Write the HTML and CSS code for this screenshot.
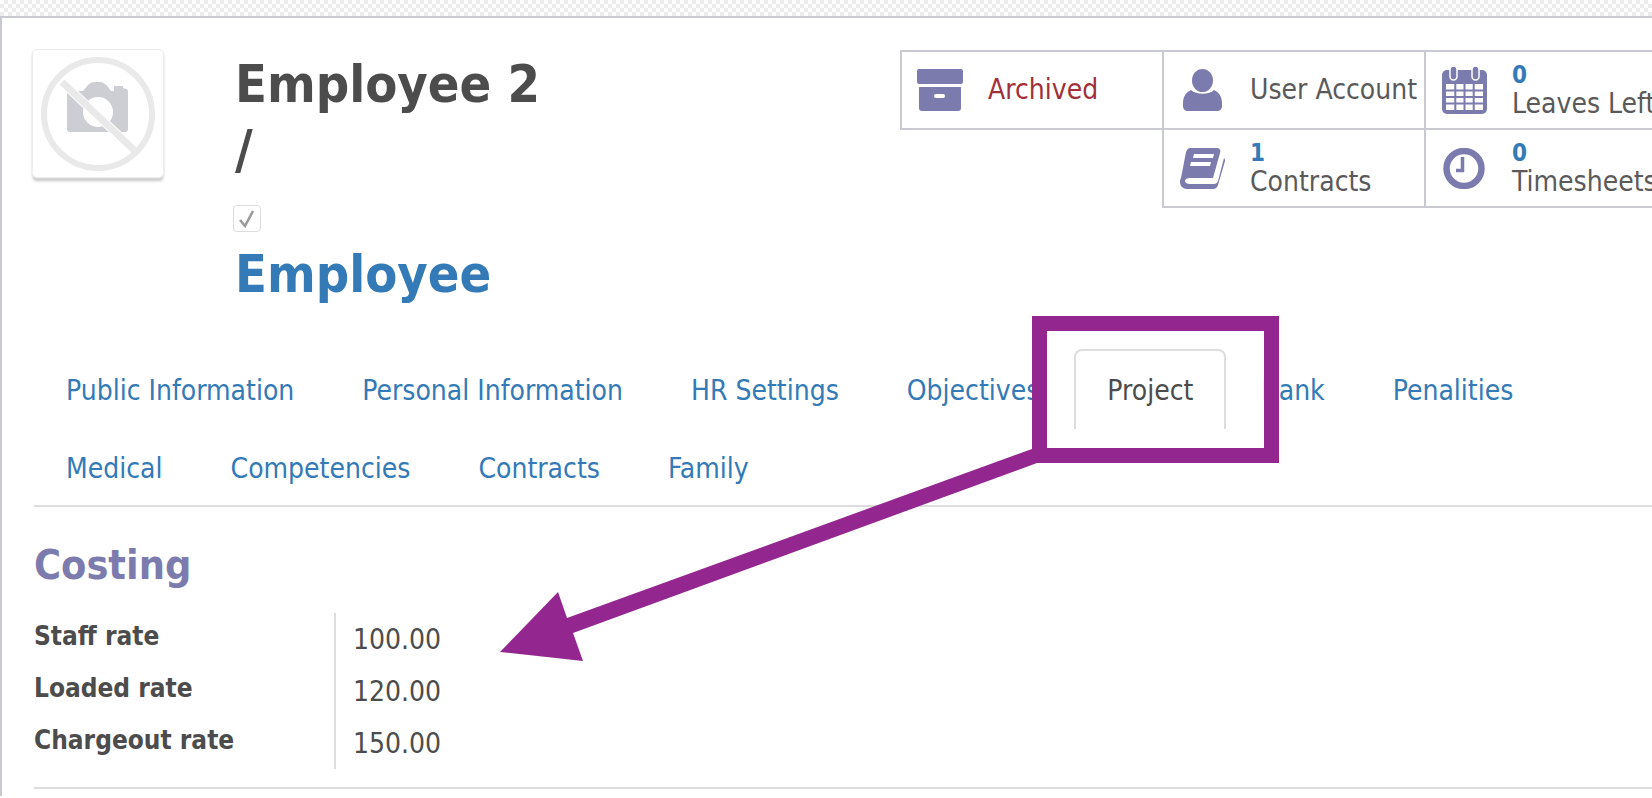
FILE: index.html
```html
<!doctype html>
<html lang="en-us">
  <head>
    <meta charset="utf-8">
    <title>Employee 2</title>
    <link rel="stylesheet" href="styles.css">
  </head>
  <body>
    <div class="band"></div>
    <div class="sheet">
      <div class="header">
        <div class="avatar">
          <svg width="132" height="130" viewBox="0 0 132 130">
            <path class="cam" d="M37 42h14l5-6c2-2 4-3 7-3h4c4 0 7 2 9 5l3 4h3v-5h9v2l3 1c2 0 2 2 2 3v37c0 2-1 3-3 3H38c-2 0-3-1-3-3V45c0-2 1-3 2-3z"/>
            <circle class="lens" cx="66" cy="63" r="15"/>
            <path class="slash-gap" d="M30 33l72 68"/>
            <path class="slash" d="M30 33l72 68"/>
            <circle class="ring" cx="66" cy="65" r="54"/>
          </svg>
        </div>
        <div class="title">
          <h1 class="name">Employee 2</h1>
          <div class="slash-line">/</div>
          <div class="check">
            <svg width="20" height="20" viewBox="0 0 20 20"><path d="M3 11l5 6 8-15" fill="none" stroke="#9a9a9a" stroke-width="2.6"/></svg>
          </div>
          <div class="category">Employee</div>
        </div>
        <div class="stats">
          <div class="stat">
            <div class="ico-box">
              <svg class="ico" width="46" height="42" viewBox="0 0 46 42">
                <rect width="46" height="15" rx="2"/>
                <path d="M2 18h42v21c0 2-1 3-3 3H5c-2 0-3-1-3-3z"/>
                <rect class="hole" x="17" y="25" width="11" height="4" rx="2"/>
              </svg>
            </div>
            <span class="stat-label archived">Archived</span>
          </div>
          <div class="stat">
            <div class="ico-box">
              <svg class="ico" width="39" height="42" viewBox="0 0 39 42">
                <ellipse cx="19.5" cy="11.5" rx="10.5" ry="11.5"/>
                <path d="M8 21c5 5 18 5 23 0 5 2 8 7 8 13v3c0 3-2 5-5 5H5c-3 0-5-2-5-5v-3c0-6 3-11 8-13z"/>
              </svg>
            </div>
            <span class="stat-label">User Account</span>
          </div>
          <div class="stat">
            <div class="ico-box">
              <svg class="ico" width="45" height="48" viewBox="0 0 45 48">
                <rect y="4" width="45" height="44" rx="5"/>
                <rect class="hole" x="4" y="18" width="37" height="26"/>
                <path class="grid-lines" d="M13.3 18v26M22.5 18v26M31.7 18v26M4 24.5h37M4 31h37M4 37.5h37"/>
                <rect x="8" y="0" width="7" height="14" rx="3.5" class="ring-out"/>
                <rect x="30" y="0" width="7" height="14" rx="3.5" class="ring-out"/>
              </svg>
            </div>
            <div class="stat-text"><span class="num">0</span><span class="stat-label">Leaves Left</span></div>
          </div>
          <div class="stat-empty"></div>
          <div class="stat">
            <div class="ico-box">
              <svg class="ico" width="45" height="41" viewBox="0 0 45 41">
                <path d="M10 0h26c4 0 5 2 4 5l-7 25H10c-3 0-5 1-5 3s2 3 5 3h24c2 0 3-1 4-3l6-23c1 1 1 2 1 3l-7 24c-1 3-3 4-5 4H7c-4 0-7-3-7-7 0-1 0-3 1-4L6 4c1-2 2-4 4-4z"/>
                <path class="hole" d="M14 6h20l-1 4H13zM11 14h20l-1 4H10z"/>
              </svg>
            </div>
            <div class="stat-text"><span class="num">1</span><span class="stat-label">Contracts</span></div>
          </div>
          <div class="stat">
            <div class="ico-box">
              <svg class="ico" width="42" height="41" viewBox="0 0 42 41">
                <circle class="clock" cx="21" cy="20.5" r="17.5"/>
                <path class="hands" d="M19.5 9v13.5H13"/>
              </svg>
            </div>
            <div class="stat-text"><span class="num">0</span><span class="stat-label">Timesheets</span></div>
          </div>
        </div>
      </div>

      <ul class="tabs">
        <li class="tab">Public Information</li>
        <li class="tab">Personal Information</li>
        <li class="tab">HR Settings</li>
        <li class="tab">Objectives</li>
        <li class="tab active">Project</li>
        <li class="tab">Bank</li>
        <li class="tab">Penalities</li>
        <li class="tab">Medical</li>
        <li class="tab">Competencies</li>
        <li class="tab">Contracts</li>
        <li class="tab">Family</li>
      </ul>

      <div class="content">
        <h2 class="group">Costing</h2>
        <div class="rates">
          <div class="rate-label">Staff rate</div><div class="rate-value">100.00</div>
          <div class="rate-label">Loaded rate</div><div class="rate-value">120.00</div>
          <div class="rate-label">Chargeout rate</div><div class="rate-value">150.00</div>
        </div>
      </div>
    </div>

    <!-- annotation drawn over the screenshot -->
    <svg class="annotation" width="1652" height="798" viewBox="0 0 1652 798">
      <rect class="note-box" x="1039.5" y="323.5" width="232" height="132"/>
      <path class="note-arrow" d="M1032 449L567 618 558 592 500 652 583 661 573 633 1037 463z"/>
    </svg>
  </body>
</html>
```

FILE: styles.css
```css
html, body {
  margin: 0;
  height: 798px;
  overflow: hidden;
}

body {
  font-family: "DejaVu Sans Condensed", "DejaVu Sans", sans-serif;
  font-stretch: condensed;
  font-size: 28px;
  color: #4c4c4c;
  background: #fff;
  position: relative;
}

.band {
  height: 16px;
  background-color: #fff;
  background-image: conic-gradient(#ececec 25%, #fff 0 50%, #ececec 0 75%, #fff 0);
  background-size: 8px 8px;
}

.sheet {
  border-top: 2px solid #c9c9d2;
  border-left: 2px solid #c9c9d2;
  height: 780px;
  box-sizing: border-box;
}

.header {
  display: flex;
  height: 331px;
}

.avatar {
  flex: none;
  width: 132px;
  height: 129px;
  margin: 31px 0 0 30px;
  border-radius: 5px;
  box-shadow: 0 1px 2px #ddd, 0 4px 3px -1px #c4c4c4;
  border: 1px solid #ececec;
  box-sizing: border-box;
}

.avatar svg {
  display: block;
  margin: -1px;
}

.cam { fill: #cdcdd4; }
.lens { fill: #fff; stroke: none; }
.ring { fill: none; stroke: #e9e9e9; stroke-width: 6; }
.slash { fill: none; stroke: #e9e9e9; stroke-width: 7; }
.slash-gap { fill: none; stroke: #fff; stroke-width: 9; }

.title {
  flex: none;
  width: 667px;
  margin-left: 71px;
  padding-top: 35px;
  box-sizing: border-box;
}

.name {
  margin: 0;
  font-size: 52px;
  line-height: 62px;
  font-weight: bold;
  color: #4c4c4c;
}

.slash-line {
  margin-top: 4px;
  font-size: 54px;
  line-height: 62px;
  font-weight: bold;
  color: #4c4c4c;
}

.check {
  width: 28px;
  height: 27px;
  margin: 24px 0 0 -2px;
  border: 1px solid #ddd;
  border-radius: 4px;
  box-sizing: border-box;
  display: flex;
  align-items: center;
  justify-content: center;
}

.category {
  font-size: 52px;
  line-height: 62px;
  font-weight: bold;
  color: #337ab7;
  margin-top: 11px;
}

.stats {
  flex: none;
  display: grid;
  grid-template-columns: repeat(3, 262px);
  grid-auto-rows: 78px;
  margin-top: 32px;
  align-self: flex-start;
}

.stat {
  display: flex;
  align-items: center;
  box-sizing: border-box;
  border: 2px solid #c9c9d2;
  margin: 0 0 -2px -2px;
  width: 264px;
  height: 80px;
}

.stat-empty { border: 0; }

.ico-box {
  flex: none;
  width: 76px;
  display: flex;
  justify-content: center;
}

.ico {
  flex: none;
  fill: #7c7bad;
}

.hole { fill: #fff; }
.grid-lines { fill: none; stroke: #7c7bad; stroke-width: 2; }
.ring-out { stroke: #fff; stroke-width: 1.5; }
.clock { fill: #fff; stroke: #7c7bad; stroke-width: 6.5; }
.hands { fill: none; stroke: #7c7bad; stroke-width: 3.5; }

.stat-label {
  display: block;
  margin-left: 10px;
  font-size: 28px;
  line-height: 30px;
  color: #5a5a5a;
  white-space: nowrap;
}

.archived { color: #a1303a; }

.stat-text {
  display: flex;
  flex-direction: column;
}

.stat-text .num {
  margin-left: 10px;
  font-size: 24px;
  line-height: 28px;
  font-weight: bold;
  color: #337ab7;
}

.tabs {
  display: flex;
  flex-wrap: wrap;
  list-style: none;
  margin: 0 0 0 32px;
  padding: 0;
  border-bottom: 2px solid #ddd;
  width: 1620px;
  box-sizing: border-box;
}

.tab {
  height: 78px;
  line-height: 80px;
  box-sizing: border-box;
  padding: 0 31px;
  border: 2px solid transparent;
  border-bottom: 0;
  margin-right: 2px;
  color: #337ab7;
  white-space: nowrap;
}

.tab:first-child,
.tab:nth-child(8) { margin-left: -1px; }

.tab.active {
  height: 80px;
  margin-bottom: -2px;
  color: #4c4c4c;
  border-color: #ddd;
  border-radius: 8px 8px 0 0;
}

.content {
  margin-left: 32px;
  width: 1620px;
  height: 282px;
  border-bottom: 2px solid #ddd;
  box-sizing: border-box;
}

.group {
  margin: 0;
  padding-top: 35px;
  font-size: 41px;
  line-height: 46px;
  font-weight: bold;
  color: #7c7bad;
}

.rates {
  display: grid;
  grid-template-columns: 300px auto;
  grid-auto-rows: 52px;
  justify-content: start;
  margin-top: 25px;
}

.rate-label {
  font-weight: bold;
  font-size: 26px;
  line-height: 46px;
  color: #4c4c4c;
}

.rate-value {
  border-left: 2px solid #ddd;
  padding-left: 17px;
  width: 200px;
  line-height: 54px;
  color: #4c4c4c;
}

.annotation {
  position: absolute;
  left: 0;
  top: 0;
}

.note-box {
  fill: none;
  stroke: #93278f;
  stroke-width: 15;
}

.note-arrow { fill: #93278f; }
```
